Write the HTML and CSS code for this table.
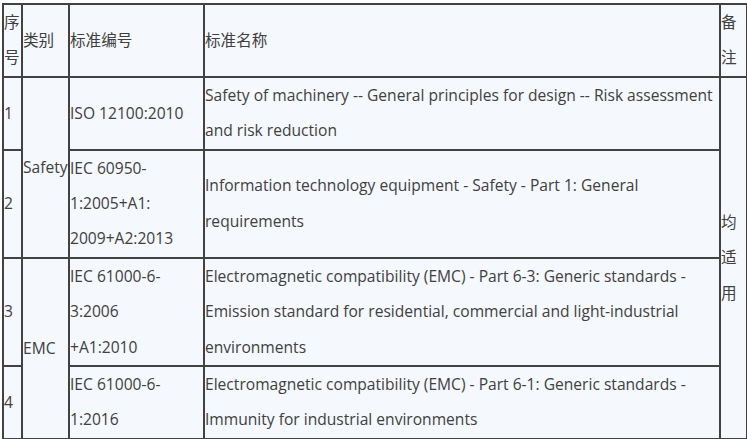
FILE: index.html
```html
<!DOCTYPE html>
<html lang="zh-CN">
<head>
<meta charset="utf-8">
<title>标准列表</title>
<link rel="stylesheet" href="styles.css">
</head>
<body>
<table class="std">
  <colgroup>
    <col class="c-no">
    <col class="c-cat">
    <col class="c-code">
    <col class="c-name">
    <col class="c-note">
  </colgroup>
  <tr class="head">
    <td>序号</td>
    <td>类别</td>
    <td>标准编号</td>
    <td>标准名称</td>
    <td>备注</td>
  </tr>
  <tr>
    <td>1</td>
    <td rowspan="2">Safety</td>
    <td>ISO 12100:2010</td>
    <td>Safety of machinery -- General principles for design -- Risk assessment and risk reduction</td>
    <td rowspan="4" class="note">均适用</td>
  </tr>
  <tr>
    <td>2</td>
    <td>IEC 60950-1:2005+A1: 2009+A2:2013</td>
    <td>Information technology equipment - Safety - Part 1: General requirements</td>
  </tr>
  <tr>
    <td>3</td>
    <td rowspan="2">EMC</td>
    <td>IEC 61000-6-3:2006<br>+A1:2010</td>
    <td>Electromagnetic compatibility (EMC) - Part 6-3: Generic standards - Emission standard for residential, commercial and light-industrial environments</td>
  </tr>
  <tr>
    <td>4</td>
    <td>IEC 61000-6-1:2016</td>
    <td>Electromagnetic compatibility (EMC) - Part 6-1: Generic standards - Immunity for industrial environments</td>
  </tr>
</table>
</body>
</html>
```

FILE: styles.css
```css
html, body {
  margin: 0;
  padding: 0;
  background: #ffffff;
}
body {
  padding: 3px 0 0 2px;
}
.std {
  border-collapse: collapse;
  table-layout: fixed;
  width: 744px;
  background: #f5f8fc;
  font-family: "Open Sans", "Noto Sans CJK SC", sans-serif;
  font-size: 15.6px;
  line-height: 35.4px;
  color: #404040;
}
.std td {
  border: 2px solid #424242;
  padding: 0;
  vertical-align: middle;
  text-align: left;
  word-break: normal;
  overflow-wrap: break-word;
}
.c-no { width: 19px; }
.c-cat { width: 47px; }
.c-code { width: 135px; }
.c-name { width: 516px; }
.c-note { width: 27px; }
```
